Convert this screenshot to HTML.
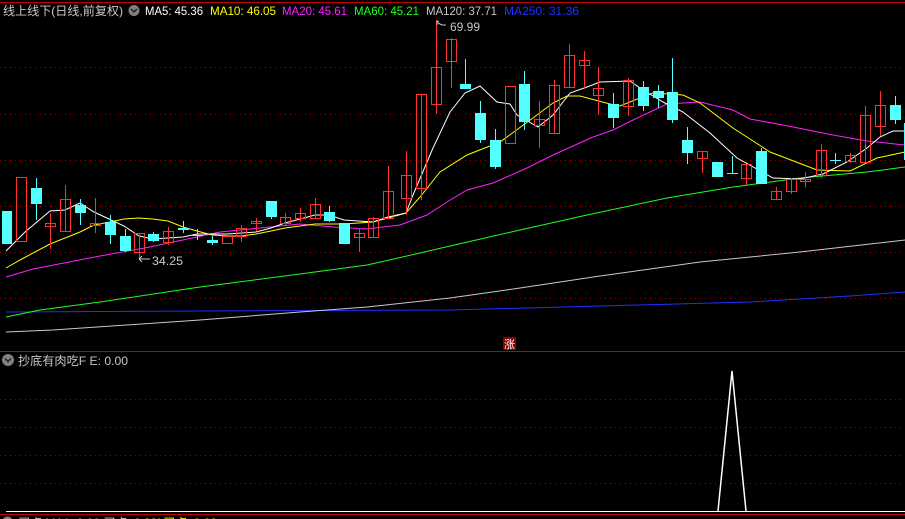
<!DOCTYPE html>
<html><head><meta charset="utf-8"><style>
html,body{margin:0;padding:0;background:#000;width:905px;height:519px;overflow:hidden}
svg{display:block}
text{font-family:"Liberation Sans","Noto Sans CJK SC",sans-serif;font-size:12px}
</style></head><body>
<svg width="905" height="519" viewBox="0 0 905 519" xmlns="http://www.w3.org/2000/svg">
<rect width="905" height="519" fill="#000"/>
<g stroke="#a00000" stroke-width="1" stroke-dasharray="1,4" shape-rendering="crispEdges">
<line x1="0" y1="67.5" x2="905" y2="67.5"/><line x1="0" y1="114.5" x2="905" y2="114.5"/><line x1="0" y1="160.5" x2="905" y2="160.5"/><line x1="0" y1="206.5" x2="905" y2="206.5"/><line x1="0" y1="252.5" x2="905" y2="252.5"/><line x1="0" y1="298.5" x2="905" y2="298.5"/>
<line x1="0" y1="399.5" x2="905" y2="399.5"/><line x1="0" y1="427.5" x2="905" y2="427.5"/><line x1="0" y1="455.5" x2="905" y2="455.5"/><line x1="0" y1="483.5" x2="905" y2="483.5"/>
</g>
<g stroke="#c00000" stroke-width="1" shape-rendering="crispEdges">
<line x1="0" y1="2.5" x2="905" y2="2.5"/><line x1="0" y1="351.5" x2="905" y2="351.5"/><line x1="0" y1="514.5" x2="905" y2="514.5"/>
</g>
<line x1="6" y1="511.5" x2="905" y2="511.5" stroke="#fff" shape-rendering="crispEdges"/>

<g fill="none" stroke-width="1">
<polyline stroke="#2030ff" points="6,312 200,311 450,310 600,306 750,302 850,296 905,292"/>
<polyline stroke="#c8c8c8" points="6,332 53,330 200,320 300,312 367,307 450,298 520,288 600,276 700,262 800,252 870,244 905,240"/>
<polyline stroke="#20ff20" points="6,317 40,310 100,302 200,287 300,274 367,265 420,253 450,246 520,230 587,215 667,198 733,187 800,178 867,172 905,167"/>
<polyline stroke="#ff20ff" points="6,277 33,269 100,256 150,247 220,232 300,224 333,227 367,229 400,225 427,215 447,202 467,190 493,183 527,168 553,155 593,137 613,130 633,120 667,104 700,102 733,110 750,119 783,125 833,135 867,141 905,145"/>
<polyline stroke="#ffff00" points="6,268 20,260 50,244 80,232 94,225 110,222 124,219 139,218 153,219 168,221 183,227 197,231 212,235 227,236 241,236 256,234 271,231 285,228 300,226 315,224 344,224 373,222 388,218 406,213 420,197 440,172 467,155 500,142 533,118 553,103 567,96 580,96 610,104 620,106 640,98 653,93 683,95 700,103 733,128 770,152 817,170 850,171 877,158 905,152"/>
<polyline stroke="#ffffff" points="6,251 25,232 50,211 65,210 80,203 94,212 109,219 124,226 139,236 153,239 168,238 183,237 197,234 227,234 256,232 271,228 285,223 300,219 315,215 329,215 344,220 373,222 388,217 406,213 413,195 433,148 450,112 465,93 480,86 497,102 510,104 517,115 538,127 553,115 570,93 587,87 600,82 630,81 640,88 663,102 683,112 710,133 737,158 773,178 800,179 823,174 847,162 867,148 880,137 893,131 905,131"/>
</g>

<g shape-rendering="crispEdges">
<g stroke="#ff3232" fill="none">
<rect x="16.5" y="177.5" width="10" height="64"/>
<line x1="50.5" y1="213" x2="50.5" y2="249"/><rect x="45.5" y="223.5" width="10" height="3"/>
<line x1="65.5" y1="185" x2="65.5" y2="232"/><rect x="60.5" y="199.5" width="10" height="32"/>
<line x1="95.5" y1="198" x2="95.5" y2="233"/><rect x="90.5" y="223.5" width="10" height="2"/>
<line x1="139.5" y1="233" x2="139.5" y2="258"/><rect x="134.5" y="233.5" width="10" height="19"/>
<line x1="168.5" y1="227" x2="168.5" y2="245"/><rect x="163.5" y="231.5" width="10" height="11"/>
<rect x="222.5" y="236.5" width="10" height="7"/>
<line x1="241.5" y1="225" x2="241.5" y2="242"/><rect x="236.5" y="228.5" width="10" height="8"/>
<line x1="256.5" y1="218" x2="256.5" y2="231"/><rect x="251.5" y="221.5" width="10" height="2"/>
<line x1="285.5" y1="213" x2="285.5" y2="225"/><rect x="280.5" y="217.5" width="10" height="6"/>
<line x1="300.5" y1="208" x2="300.5" y2="222"/><rect x="295.5" y="213.5" width="10" height="5"/>
<line x1="315.5" y1="198" x2="315.5" y2="218"/><rect x="310.5" y="204.5" width="10" height="14"/>
<line x1="359.5" y1="228" x2="359.5" y2="252"/><rect x="354.5" y="233.5" width="10" height="4"/>
<line x1="373.5" y1="217" x2="373.5" y2="238"/><rect x="368.5" y="218.5" width="10" height="19"/>
<line x1="388.5" y1="166" x2="388.5" y2="219"/><rect x="383.5" y="191.5" width="10" height="27"/>
<line x1="406.5" y1="151" x2="406.5" y2="215"/><rect x="401.5" y="175.5" width="10" height="23"/>
<line x1="421.5" y1="94" x2="421.5" y2="200"/><rect x="416.5" y="94.5" width="10" height="94"/>
<line x1="436.5" y1="20" x2="436.5" y2="114"/><rect x="431.5" y="67.5" width="10" height="37"/>
<line x1="451.5" y1="38" x2="451.5" y2="88"/><rect x="446.5" y="39.5" width="10" height="22"/>
<rect x="505.5" y="86.5" width="10" height="57"/>
<line x1="539.5" y1="101" x2="539.5" y2="148"/><rect x="534.5" y="119.5" width="10" height="6"/>
<line x1="554.5" y1="80" x2="554.5" y2="134"/><rect x="549.5" y="85.5" width="10" height="48"/>
<line x1="569.5" y1="44" x2="569.5" y2="88"/><rect x="564.5" y="55.5" width="10" height="32"/>
<line x1="584.5" y1="51" x2="584.5" y2="88"/><rect x="579.5" y="60.5" width="10" height="5"/>
<line x1="598.5" y1="67" x2="598.5" y2="115"/><rect x="593.5" y="88.5" width="10" height="7"/>
<line x1="628.5" y1="78" x2="628.5" y2="116"/><rect x="623.5" y="80.5" width="10" height="26"/>
<line x1="702.5" y1="151" x2="702.5" y2="173"/><rect x="697.5" y="151.5" width="10" height="7"/>
<line x1="746.5" y1="164" x2="746.5" y2="185"/><rect x="741.5" y="164.5" width="10" height="14"/>
<line x1="776.5" y1="187" x2="776.5" y2="199"/><rect x="771.5" y="191.5" width="10" height="8"/>
<line x1="791.5" y1="178" x2="791.5" y2="194"/><rect x="786.5" y="179.5" width="10" height="12"/>
<line x1="805.5" y1="172" x2="805.5" y2="187"/><rect x="800.5" y="179.5" width="10" height="2"/>
<line x1="821.5" y1="144" x2="821.5" y2="178"/><rect x="816.5" y="150.5" width="10" height="25"/>
<line x1="850.5" y1="153" x2="850.5" y2="163"/><rect x="845.5" y="155.5" width="10" height="6"/>
<line x1="865.5" y1="106" x2="865.5" y2="163"/><rect x="860.5" y="115.5" width="10" height="47"/>
<line x1="880.5" y1="91" x2="880.5" y2="136"/><rect x="875.5" y="105.5" width="10" height="21"/>
</g>
<g fill="#54ffff" stroke="#54ffff">
<rect x="2" y="211" width="10" height="33" stroke="none"/>
<line x1="36.5" y1="178" x2="36.5" y2="220"/><rect x="31" y="188" width="11" height="16" stroke="none"/>
<line x1="80.5" y1="199" x2="80.5" y2="225"/><rect x="75" y="205" width="11" height="8" stroke="none"/>
<line x1="110.5" y1="215" x2="110.5" y2="244"/><rect x="105" y="222" width="11" height="13" stroke="none"/>
<line x1="125.5" y1="229" x2="125.5" y2="252"/><rect x="120" y="236" width="11" height="15" stroke="none"/>
<line x1="153.5" y1="232" x2="153.5" y2="242"/><rect x="148" y="234" width="11" height="7" stroke="none"/>
<line x1="183.5" y1="221" x2="183.5" y2="233"/><rect x="178" y="228" width="11" height="2" stroke="none"/>
<line x1="197.5" y1="229" x2="197.5" y2="240"/><rect x="192" y="235" width="11" height="1" stroke="none"/>
<line x1="212.5" y1="236" x2="212.5" y2="245"/><rect x="207" y="240" width="11" height="3" stroke="none"/>
<line x1="271.5" y1="201" x2="271.5" y2="219"/><rect x="266" y="201" width="11" height="16" stroke="none"/>
<line x1="329.5" y1="206" x2="329.5" y2="222"/><rect x="324" y="212" width="11" height="9" stroke="none"/>
<rect x="339" y="223" width="11" height="21" stroke="none"/>
<line x1="465.5" y1="59" x2="465.5" y2="89"/><rect x="460" y="84" width="11" height="5" stroke="none"/>
<line x1="480.5" y1="101" x2="480.5" y2="143"/><rect x="475" y="113" width="11" height="27" stroke="none"/>
<line x1="495.5" y1="129" x2="495.5" y2="169"/><rect x="490" y="140" width="11" height="27" stroke="none"/>
<line x1="524.5" y1="71" x2="524.5" y2="130"/><rect x="519" y="84" width="11" height="38" stroke="none"/>
<line x1="613.5" y1="93" x2="613.5" y2="128"/><rect x="608" y="104" width="11" height="14" stroke="none"/>
<line x1="643.5" y1="81" x2="643.5" y2="111"/><rect x="638" y="87" width="11" height="19" stroke="none"/>
<line x1="658.5" y1="85" x2="658.5" y2="108"/><rect x="653" y="91" width="11" height="7" stroke="none"/>
<line x1="672.5" y1="58" x2="672.5" y2="123"/><rect x="667" y="92" width="11" height="28" stroke="none"/>
<line x1="687.5" y1="127" x2="687.5" y2="164"/><rect x="682" y="140" width="11" height="13" stroke="none"/>
<rect x="712" y="162" width="11" height="15" stroke="none"/>
<line x1="732.5" y1="156" x2="732.5" y2="174"/><rect x="727" y="173" width="11" height="1" stroke="none"/>
<line x1="761.5" y1="148" x2="761.5" y2="184"/><rect x="756" y="151" width="11" height="33" stroke="none"/>
<line x1="835.5" y1="153" x2="835.5" y2="164"/><rect x="830" y="160" width="11" height="1" stroke="none"/>
<line x1="895.5" y1="96" x2="895.5" y2="124"/><rect x="890" y="105" width="11" height="15" stroke="none"/>
<rect x="904" y="123" width="1" height="37" stroke="none"/>
</g>
</g>

<g fill="#c8c8c8">
<text x="152" y="265" textLength="31" lengthAdjust="spacingAndGlyphs">34.25</text>
<text x="450" y="31" textLength="30" lengthAdjust="spacingAndGlyphs">69.99</text>
</g>
<path d="M139 259 H150 M139 259 l3 -3 M139 259 l3 3" stroke="#c8c8c8" fill="none"/>
<path d="M437 21 l2 1 M437 21 v4 M438 23 l4 2 h4" stroke="#c8c8c8" fill="none"/>
<rect x="503" y="337" width="13" height="13" fill="#8a0000"/>
<text x="504" y="348" fill="#fff" style="font-size:11px">涨</text>

<text x="3" y="15" fill="#c8c8c8" textLength="120" lengthAdjust="spacingAndGlyphs">线上线下(日线,前复权)</text>
<circle cx="134" cy="10.5" r="5.5" fill="#808080"/>
<path d="M131 9 l3 3 l3 -3" stroke="#222" stroke-width="1.5" fill="none"/>
<text x="145" y="15" fill="#ffffff" textLength="58" lengthAdjust="spacingAndGlyphs">MA5: 45.36</text>
<text x="210" y="15" fill="#ffff00" textLength="66" lengthAdjust="spacingAndGlyphs">MA10: 46.05</text>
<text x="282" y="15" fill="#ff20ff" textLength="65" lengthAdjust="spacingAndGlyphs">MA20: 45.61</text>
<text x="354" y="15" fill="#20ff20" textLength="65" lengthAdjust="spacingAndGlyphs">MA60: 45.21</text>
<text x="426" y="15" fill="#c8c8c8" textLength="71" lengthAdjust="spacingAndGlyphs">MA120: 37.71</text>
<text x="504" y="15" fill="#2030ff" textLength="75" lengthAdjust="spacingAndGlyphs">MA250: 31.36</text>

<circle cx="8" cy="360" r="6" fill="#808080"/>
<path d="M5 358.5 l3 3 l3 -3" stroke="#222" stroke-width="1.5" fill="none"/>
<text x="18" y="365" fill="#c8c8c8" textLength="110" lengthAdjust="spacingAndGlyphs">抄底有肉吃F  E: 0.00</text>
<polyline points="718,511 732,371 746,511" fill="none" stroke="#fff" stroke-width="1.5"/>

<circle cx="7.5" cy="522" r="5.5" fill="#808080"/>
<text x="18" y="527" fill="#c8c8c8">买点 MA1: 0.00  买点: 0.00</text>
<text x="145" y="527" fill="#ffff00">MA买点: 0.00</text>
</svg>
</body></html>
